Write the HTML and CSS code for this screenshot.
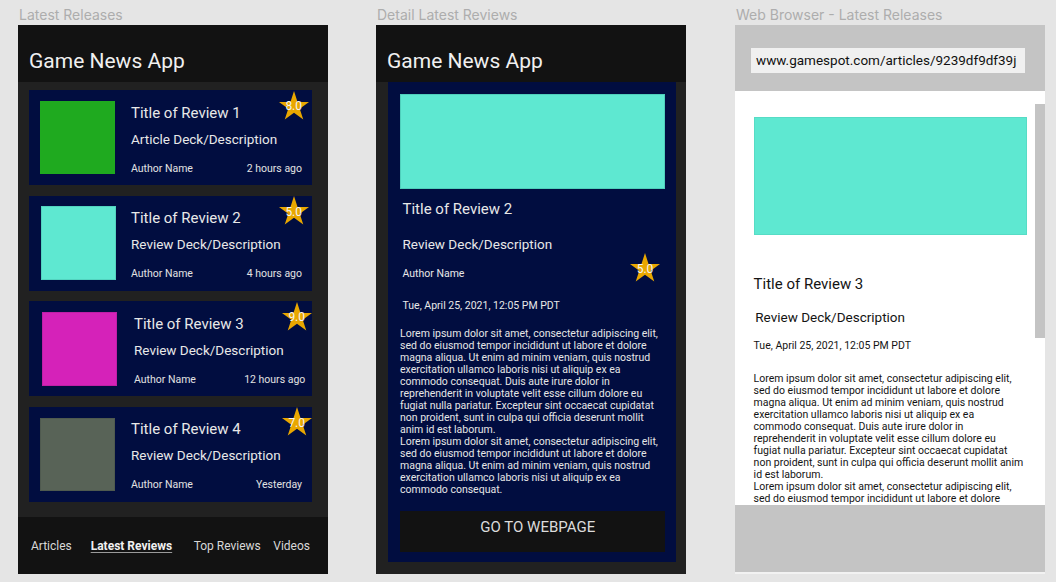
FILE: index.html
```html
<!DOCTYPE html>
<html lang="en">
<head>
<meta charset="utf-8">
<title>Game News App</title>
<link rel="stylesheet" href="styles.css">
</head>
<body>
<svg width="0" height="0" class="defs" aria-hidden="true">
  <defs>
    <polygon id="star-shape" points="15,0 18.54,10.9 30,10.9 20.73,17.63 24.27,28.53 15,21.79 5.73,28.53 9.27,17.63 0,10.9 11.46,10.9"/>
  </defs>
</svg>
<div class="board">
  <section class="col">
    <div class="label">Latest Releases</div>
    <div class="frame phone">
      <header class="appbar">Game News App</header>
      <div class="list">
        <article class="card">
          <div class="thumb thumb--green"></div>
          <div class="card-body">
            <div class="card-title">Title of Review 1</div>
            <div class="card-desc">Article Deck/Description</div>
            <div class="card-meta"><span>Author Name</span><span>2 hours ago</span></div>
          </div>
          <div class="star"><svg viewBox="0 0 30 29"><use href="#star-shape"/></svg><span>8.0</span></div>
        </article>
        <article class="card card--nudge-img">
          <div class="thumb thumb--cyan"></div>
          <div class="card-body">
            <div class="card-title">Title of Review 2</div>
            <div class="card-desc">Review Deck/Description</div>
            <div class="card-meta"><span>Author Name</span><span>4 hours ago</span></div>
          </div>
          <div class="star"><svg viewBox="0 0 30 29"><use href="#star-shape"/></svg><span>5.0</span></div>
        </article>
        <article class="card card--nudge-img card--shifted card--edge-star">
          <div class="thumb thumb--magenta"></div>
          <div class="card-body">
            <div class="card-title">Title of Review 3</div>
            <div class="card-desc">Review Deck/Description</div>
            <div class="card-meta"><span>Author Name</span><span>12 hours ago</span></div>
          </div>
          <div class="star"><svg viewBox="0 0 30 29"><use href="#star-shape"/></svg><span>9.0</span></div>
        </article>
        <article class="card card--edge-star">
          <div class="thumb thumb--sage"></div>
          <div class="card-body">
            <div class="card-title">Title of Review 4</div>
            <div class="card-desc">Review Deck/Description</div>
            <div class="card-meta"><span>Author Name</span><span>Yesterday</span></div>
          </div>
          <div class="star"><svg viewBox="0 0 30 29"><use href="#star-shape"/></svg><span>7.0</span></div>
        </article>
      </div>
      <nav class="tabs">
        <span class="tab">Articles</span>
        <span class="tab tab--active">Latest Reviews</span>
        <span class="tab">Top Reviews</span>
        <span class="tab">Videos</span>
      </nav>
    </div>
  </section>

  <section class="col">
    <div class="label">Detail Latest Reviews</div>
    <div class="frame phone">
      <header class="appbar">Game News App</header>
      <div class="detail-wrap">
        <div class="detail">
          <div class="hero"></div>
          <div class="detail-title">Title of Review 2</div>
          <div class="detail-desc">Review Deck/Description</div>
          <div class="detail-author">
            <span class="detail-author-name">Author Name</span>
            <div class="star star--inline"><svg viewBox="0 0 30 29"><use href="#star-shape"/></svg><span>5.0</span></div>
          </div>
          <div class="detail-date">Tue, April 25, 2021, 12:05 PM PDT</div>
          <div class="detail-text">
            <p>Lorem ipsum dolor sit amet, consectetur adipiscing elit, sed do eiusmod tempor incididunt ut labore et dolore magna aliqua. Ut enim ad minim veniam, quis nostrud exercitation ullamco laboris nisi ut aliquip ex ea commodo consequat. Duis aute irure dolor in reprehenderit in voluptate velit esse cillum dolore eu fugiat nulla pariatur. Excepteur sint occaecat cupidatat non proident, sunt in culpa qui officia deserunt mollit anim id est laborum.</p>
            <p>Lorem ipsum dolor sit amet, consectetur adipiscing elit, sed do eiusmod tempor incididunt ut labore et dolore magna aliqua. Ut enim ad minim veniam, quis nostrud exercitation ullamco laboris nisi ut aliquip ex ea commodo consequat.</p>
          </div>
          <div class="button">GO TO WEBPAGE</div>
        </div>
      </div>
    </div>
  </section>

  <section class="col col--browser">
    <div class="label">Web Browser - Latest Releases</div>
    <div class="frame browser">
      <div class="browser-bar">
        <div class="url">www.gamespot.com/articles/9239df9df39j</div>
      </div>
      <div class="page">
        <div class="page-hero"></div>
        <div class="page-title">Title of Review 3</div>
        <div class="page-desc">Review Deck/Description</div>
        <div class="page-date">Tue, April 25, 2021, 12:05 PM PDT</div>
        <div class="page-text">
          <p>Lorem ipsum dolor sit amet, consectetur adipiscing elit,<br>
          sed do eiusmod tempor incididunt ut labore et dolore<br>
          magna aliqua. Ut enim ad minim veniam, quis nostrud<br>
          exercitation ullamco laboris nisi ut aliquip ex ea<br>
          commodo consequat. Duis aute irure dolor in<br>
          reprehenderit in voluptate velit esse cillum dolore eu<br>
          fugiat nulla pariatur. Excepteur sint occaecat cupidatat<br>
          non proident, sunt in culpa qui officia deserunt mollit anim<br>
          id est laborum.</p>
          <p>Lorem ipsum dolor sit amet, consectetur adipiscing elit,<br>
          sed do eiusmod tempor incididunt ut labore et dolore<br>
          magna aliqua. Ut enim ad minim veniam, quis nostrud</p>
        </div>
        <div class="scroll-thumb"></div>
      </div>
      <div class="browser-foot"></div>
    </div>
  </section>
</div>
</body>
</html>
```

FILE: styles.css
```css
* { box-sizing: border-box; }

html, body {
  margin: 0;
  padding: 0;
}

body {
  width: 1056px;
  height: 582px;
  overflow: hidden;
  background: #e5e5e5;
  font-family: Roboto, "Liberation Sans", sans-serif;
}

.defs {
  position: absolute;
  width: 0;
  height: 0;
}

.board {
  display: flex;
  gap: 48px;
  padding-left: 18px;
}

.col {
  width: 310px;
  flex: none;
}

.col--browser {
  margin-left: 1px;
}

.label {
  height: 25px;
  padding: 6px 0 0 1px;
  font-family: Inter, "Noto Sans", sans-serif;
  font-size: 14px;
  line-height: 17px;
  color: #adadad;
  white-space: nowrap;
}

.frame {
  height: 549px;
  display: flex;
  flex-direction: column;
  overflow: hidden;
}

.phone {
  background: #121212;
}

.appbar {
  flex: none;
  height: 57px;
  padding: 24px 0 0 11px;
  font-size: 21px;
  line-height: 25px;
  color: #f0f0f0;
  background: #121212;
}

/* ---------- list screen ---------- */

.list {
  flex: 1;
  display: flex;
  flex-direction: column;
  gap: 10.5px;
  padding: 8px 0 0 11px;
  background: #212121;
}

.card {
  position: relative;
  display: flex;
  width: 283px;
  height: 95px;
  flex: none;
  padding: 11px 10px 0 11px;
  background: #010d40;
}

.thumb {
  width: 75px;
  height: 73px;
  flex: none;
}

.card--nudge-img .thumb {
  margin-left: 1.3px;
  margin-top: -0.5px;
  height: 74px;
}

.thumb--green { background: #1faa1f; }
.thumb--cyan { background: #5ee8d1; box-shadow: inset 0 0 0 1px #53d3bf; }
.thumb--magenta { background: #d522b9; box-shadow: inset 0 0 0 1px #c01fa6; }
.thumb--sage { background: #586357; box-shadow: inset 0 0 0 1px #4f5a4f; }

.card-body {
  flex: 1;
  margin-left: 16px;
  padding-top: 2.5px;
  color: #e8e8e8;
}

.card--nudge-img .card-body {
  margin-left: 14.7px;
}

.card--shifted .card-body {
  margin-left: 16.7px;
  padding-right: 0;
}

.card--shifted {
  padding-right: 6.7px;
  padding-left: 12px;
}

.card-title {
  font-size: 15px;
  line-height: 18px;
  white-space: nowrap;
}

.card-desc {
  margin-top: 8px;
  font-size: 13.5px;
  line-height: 18px;
  white-space: nowrap;
}

.card-meta {
  display: flex;
  justify-content: space-between;
  margin-top: 14px;
  font-size: 10.5px;
  line-height: 14px;
  color: #e2e2e2;
}

.star {
  position: absolute;
  top: 0.7px;
  right: 3.3px;
  width: 30px;
  height: 29px;
}

.card--edge-star .star {
  right: 0.3px;
}

.star svg {
  display: block;
  width: 30px;
  height: 29px;
  fill: #e9a700;
}

.star span {
  position: absolute;
  inset: 0;
  display: flex;
  align-items: center;
  justify-content: center;
  padding-top: 2px;
  font-size: 12px;
  color: #f4f4f4;
}

.tabs {
  flex: none;
  height: 57px;
  display: grid;
  grid-template-columns: 59.7px 103px 79.6px auto;
  align-items: center;
  padding-left: 13px;
  font-size: 12px;
  color: #d8d8d8;
  background: #121212;
  white-space: nowrap;
}

.tab--active {
  font-weight: 700;
  color: #f0f0f0;
  text-decoration: underline;
  text-decoration-color: #9a9a9a;
  text-underline-offset: 2px;
}

/* ---------- detail screen ---------- */

.detail-wrap {
  flex: 1;
  padding: 0 10px 12px 12px;
  background: #212121;
}

.detail {
  height: 100%;
  display: flex;
  flex-direction: column;
  padding: 12px 11px 0 11.5px;
  color: #e8e8e8;
  background: #010d40;
}

.hero {
  height: 95px;
  flex: none;
  background: #5ee8d1;
  box-shadow: inset 0 0 0 1px #4fcfbb;
}

.detail-title {
  margin: 10.5px 0 0 3px;
  font-size: 15px;
  line-height: 18px;
}

.detail-desc {
  margin: 17px 0 0 3px;
  font-size: 13.5px;
  line-height: 18px;
}

.detail-author {
  display: flex;
  justify-content: space-between;
  align-items: flex-end;
  height: 29px;
  margin: 0.5px 5px 0 3px;
}

.detail-author-name {
  margin-bottom: 1px;
  font-size: 10.5px;
  line-height: 14px;
}

.star--inline {
  position: relative;
  top: auto;
  right: auto;
  flex: none;
}

.detail-date {
  margin: 16.5px 0 0 3px;
  font-size: 10.5px;
  line-height: 14px;
}

.detail-text {
  width: 262px;
  margin: 15.5px 0 0 0.5px;
  font-size: 10.5px;
  line-height: 12px;
  color: #e6e6e6;
}

.detail-text p,
.page-text p {
  margin: 0;
}

.button {
  height: 41px;
  margin: 14.5px 0.5px 0 0.5px;
  padding: 0 0 8px 11px;
  display: flex;
  align-items: center;
  justify-content: center;
  font-size: 15px;
  color: #dcdcdc;
  background: #121212;
}

/* ---------- browser screen ---------- */

.browser {
  background: #ffffff;
}

.browser-bar {
  flex: none;
  height: 66px;
  padding: 23px 0 0 16px;
  background: #c4c4c4;
}

.url {
  width: 274px;
  height: 25px;
  padding-left: 5px;
  font-size: 13.5px;
  line-height: 25px;
  color: #111111;
  background: #f0f0f0;
  white-space: nowrap;
}

.page {
  position: relative;
  flex: none;
  height: 414px;
  overflow: hidden;
  padding: 26px 0 0 18.6px;
  color: #141414;
  background: #ffffff;
}

.page-hero {
  width: 273.4px;
  height: 118px;
  background: #5ee8d1;
  box-shadow: inset 0 0 0 1px #56dcc5;
}

.page-title {
  margin-top: 39.5px;
  font-size: 15px;
  line-height: 18px;
}

.page-desc {
  margin: 15.7px 0 0 1.7px;
  font-size: 13.5px;
  line-height: 18px;
}

.page-date {
  margin-top: 13px;
  font-size: 10.5px;
  line-height: 14px;
}

.page-text {
  width: 280px;
  margin-top: 19.5px;
  font-size: 10.5px;
  line-height: 12px;
  white-space: nowrap;
}

.scroll-thumb {
  position: absolute;
  top: 13px;
  right: 0;
  width: 10px;
  height: 234px;
  background: #c4c4c4;
}

.browser-foot {
  flex: none;
  height: 69px;
  background: #c4c4c4;
  border-bottom: 2px solid #f2f2f2;
}
```
